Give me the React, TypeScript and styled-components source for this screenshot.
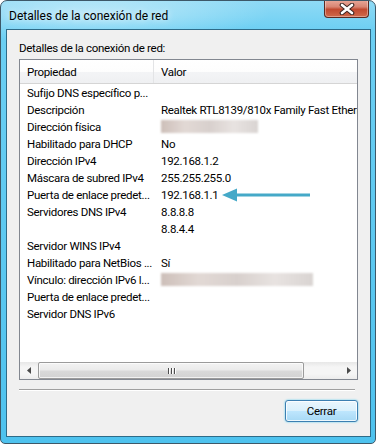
import React from 'react';
import styled, { createGlobalStyle } from 'styled-components';

type Row = {
  name: string,
  value?: string,
  blur?: number,
  arrow?: boolean,
};

const rows: Row[] = [
  { name: 'Sufijo DNS específico p...' },
  { name: 'Descripción', value: 'Realtek RTL8139/810x Family Fast Ethernet NIC' },
  { name: 'Dirección física', blur: 97 },
  { name: 'Habilitado para DHCP', value: 'No' },
  { name: 'Dirección IPv4', value: '192.168.1.2' },
  { name: 'Máscara de subred IPv4', value: '255.255.255.0' },
  { name: 'Puerta de enlace predet...', value: '192.168.1.1', arrow: true },
  { name: 'Servidores DNS IPv4', value: '8.8.8.8' },
  { name: '', value: '8.8.4.4' },
  { name: 'Servidor WINS IPv4' },
  { name: 'Habilitado para NetBios ...', value: 'Sí' },
  { name: 'Vínculo: dirección IPv6 l...', blur: 152 },
  { name: 'Puerta de enlace predet...' },
  { name: 'Servidor DNS IPv6' },
];

const FONT = `Roboto, "Noto Sans", sans-serif`;
const SIZE = '11.5px';

const GlobalStyle = createGlobalStyle`
  body {
    margin: 0;
    background: #ffffff;
    font-family: ${FONT};
    letter-spacing: -0.3px;
  }
`;

const CloseX = () => (
  <svg width="16" height="12" viewBox="0 0 16 12">
    <path d="M3 2 L13 10 M13 2 L3 10" stroke="#3b2522" strokeWidth="4.6" strokeLinecap="round" />
    <path d="M3 2 L13 10 M13 2 L3 10" stroke="#ffffff" strokeWidth="2.6" strokeLinecap="round" />
  </svg>
);

const Arrow = () => (
  <ArrowSvg width="88" height="14" viewBox="0 0 88 14">
    <path d="M0 7 L15 0.5 L15 13.5 Z" fill="#45a9c8" />
    <rect x="13" y="5.5" width="75" height="3" fill="#45a9c8" />
  </ArrowSvg>
);

const App = () => {
  return (
    <>
      <GlobalStyle />
      <Window>
        <TitleBar>
          <Title>Detalles de la conexión de red</Title>
          <CloseButton><CloseX /></CloseButton>
        </TitleBar>
        <Client>
          <Label>Detalles de la conexión de red:</Label>
          <ListView>
            <Header>
              <HeadCell width={134}>Propiedad</HeadCell>
              <HeadCell>Valor</HeadCell>
            </Header>
            <Body>
              {rows.map((r, i) => (
                <ListRow key={i}>
                  <NameCell>{r.name}</NameCell>
                  <ValueCell>
                    {r.value}
                    {r.blur && <Blurred style={{ width: r.blur }} />}
                    {r.arrow && <Arrow />}
                  </ValueCell>
                </ListRow>
              ))}
            </Body>
            <ScrollBar>
              <ScrollArrow>
                <svg width="4" height="7" viewBox="0 0 4 7"><path d="M0 3.5 L4 0 L4 7 Z" fill="#4a4a4a" /></svg>
              </ScrollArrow>
              <Track>
                <Thumb>
                  <Grip><i /><i /><i /></Grip>
                </Thumb>
              </Track>
              <ScrollArrow>
                <svg width="4" height="7" viewBox="0 0 4 7"><path d="M4 3.5 L0 0 L0 7 Z" fill="#4a4a4a" /></svg>
              </ScrollArrow>
            </ScrollBar>
          </ListView>
          <Separator />
          <Footer>
            <Button>Cerrar</Button>
          </Footer>
        </Client>
      </Window>
    </>
  );
}

const Window = styled.div`
  width: 376px;
  height: 444px;
  box-sizing: border-box;
  border: 1px solid #3d5868;
  border-radius: 7px 7px 5px 5px;
  background:
    radial-gradient(ellipse 180px 30px at 90px 12px, rgba(255, 255, 255, 0.45), rgba(255, 255, 255, 0)),
    linear-gradient(to bottom, #8fdaf5 0px, #6ccff3 30px, #4ec2ee 100%);
  display: flex;
  flex-direction: column;
  overflow: hidden;
`;

const TitleBar = styled.div`
  height: 28px;
  display: flex;
  align-items: flex-start;
  padding-left: 8px;
  padding-right: 6px;
`;

const Title = styled.div`
  font-size: 12px;
  letter-spacing: 0;
  color: #000000;
  margin-top: 8px;
  flex: 1;
  text-shadow: 0 0 6px rgba(255, 255, 255, 0.9);
`;

const CloseButton = styled.div`
  width: 45px;
  height: 18px;
  margin-top: -1px;
  box-sizing: border-box;
  border: 1px solid #5a2a22;
  border-top: none;
  border-radius: 0 0 4px 4px;
  background: linear-gradient(to bottom, #e9a99a 0%, #d88573 40%, #c14a30 55%, #cf6a4c 100%);
  box-shadow: inset 0 0 0 1px rgba(255, 255, 255, 0.35);
  display: flex;
  align-items: center;
  justify-content: center;
`;

const Client = styled.div`
  flex: 1;
  margin: 0 4px 6px 5px;
  border: 1px solid #2e6b88;
  background: #f0f0f0;
  display: flex;
  flex-direction: column;
  padding: 11px 12px 14px 12px;
`;

const Label = styled.div`
  font-size: ${SIZE};
  color: #000000;
  line-height: 15px;
  margin-bottom: 3px;
`;

const ListView = styled.div`
  flex: 1;
  border: 1px solid #828790;
  background: #ffffff;
  display: flex;
  flex-direction: column;
  overflow: hidden;
`;

const Header = styled.div`
  height: 23px;
  display: flex;
  background: linear-gradient(to bottom, #ffffff 0%, #fdfdfd 50%, #f3f4f6 51%, #eff0f2 100%);
  border-bottom: 1px solid #d5d5d5;
  flex-shrink: 0;
`;

const HeadCell = styled.div<{ width?: number }>`
  width: ${p => p.width ? `${p.width}px` : 'auto'};
  flex: ${p => p.width ? 'none' : 1};
  font-size: ${SIZE};
  color: #000000;
  display: flex;
  align-items: center;
  padding-left: 7px;
  box-sizing: border-box;
  border-right: ${p => p.width ? '1px solid #e3e4e6' : 'none'};
`;

const Body = styled.div`
  flex: 1;
`;

const ListRow = styled.div`
  height: 17px;
  display: flex;
  align-items: center;
  font-size: ${SIZE};
  color: #000000;
  white-space: nowrap;
`;

const NameCell = styled.div`
  width: 135px;
  flex: none;
  padding-left: 7px;
  box-sizing: border-box;
  overflow: hidden;
`;

const ValueCell = styled.div`
  padding-left: 6px;
  display: flex;
  align-items: center;
`;

const Blurred = styled.span`
  display: inline-block;
  height: 13px;
  background: linear-gradient(to right, #cdbfb9, #e2d9d5 25%, #d8d0cd 50%, #e8e3e1 75%, #d9d4d2);
  filter: blur(1.2px);
`;

const ArrowSvg = styled.svg`
  margin-left: 3px;
  flex: none;
`;

const ScrollBar = styled.div`
  height: 17px;
  flex-shrink: 0;
  display: flex;
  background: linear-gradient(to bottom, #e7e7e7, #f5f5f5 30%, #f5f5f5 70%, #ececec);
`;

const ScrollArrow = styled.div`
  width: 17px;
  display: flex;
  align-items: center;
  justify-content: center;
`;

const Track = styled.div`
  flex: 1;
  padding: 0 36px 0 1px;
  display: flex;
  align-items: stretch;
`;

const Thumb = styled.div`
  flex: 1;
  border: 1px solid #9b9b9b;
  border-radius: 2px;
  background: linear-gradient(to bottom, #f3f3f3 0%, #ebebeb 45%, #d9d9d9 55%, #d2d2d2 100%);
  box-shadow: inset 0 0 0 1px rgba(255, 255, 255, 0.7);
  display: flex;
  align-items: center;
  justify-content: center;
`;

const Grip = styled.div`
  display: flex;
  gap: 2px;
  i {
    display: block;
    width: 1px;
    height: 6px;
    background: #4d4d4d;
    box-shadow: 1px 0 0 #ffffff;
  }
`;

const Separator = styled.div`
  height: 1px;
  background: #a0a0a0;
  margin: 9px 3px 0 0;
  border-bottom: 1px solid #ffffff;
`;

const Footer = styled.div`
  display: flex;
  justify-content: flex-end;
  margin-top: 9px;
`;

const Button = styled.button`
  width: 73px;
  height: 22px;
  font-family: ${FONT};
  font-size: ${SIZE};
  letter-spacing: -0.3px;
  color: #000000;
  padding: 0;
  border: 1px solid #3c7fb1;
  border-radius: 3px;
  background: linear-gradient(to bottom, #eaf6fd 0%, #d9f0fc 50%, #bee6fd 51%, #a7d9f5 100%);
  box-shadow: inset 0 0 0 1px rgba(255, 255, 255, 0.8), 0 0 2px #48c8f0;
`;

export default App;
